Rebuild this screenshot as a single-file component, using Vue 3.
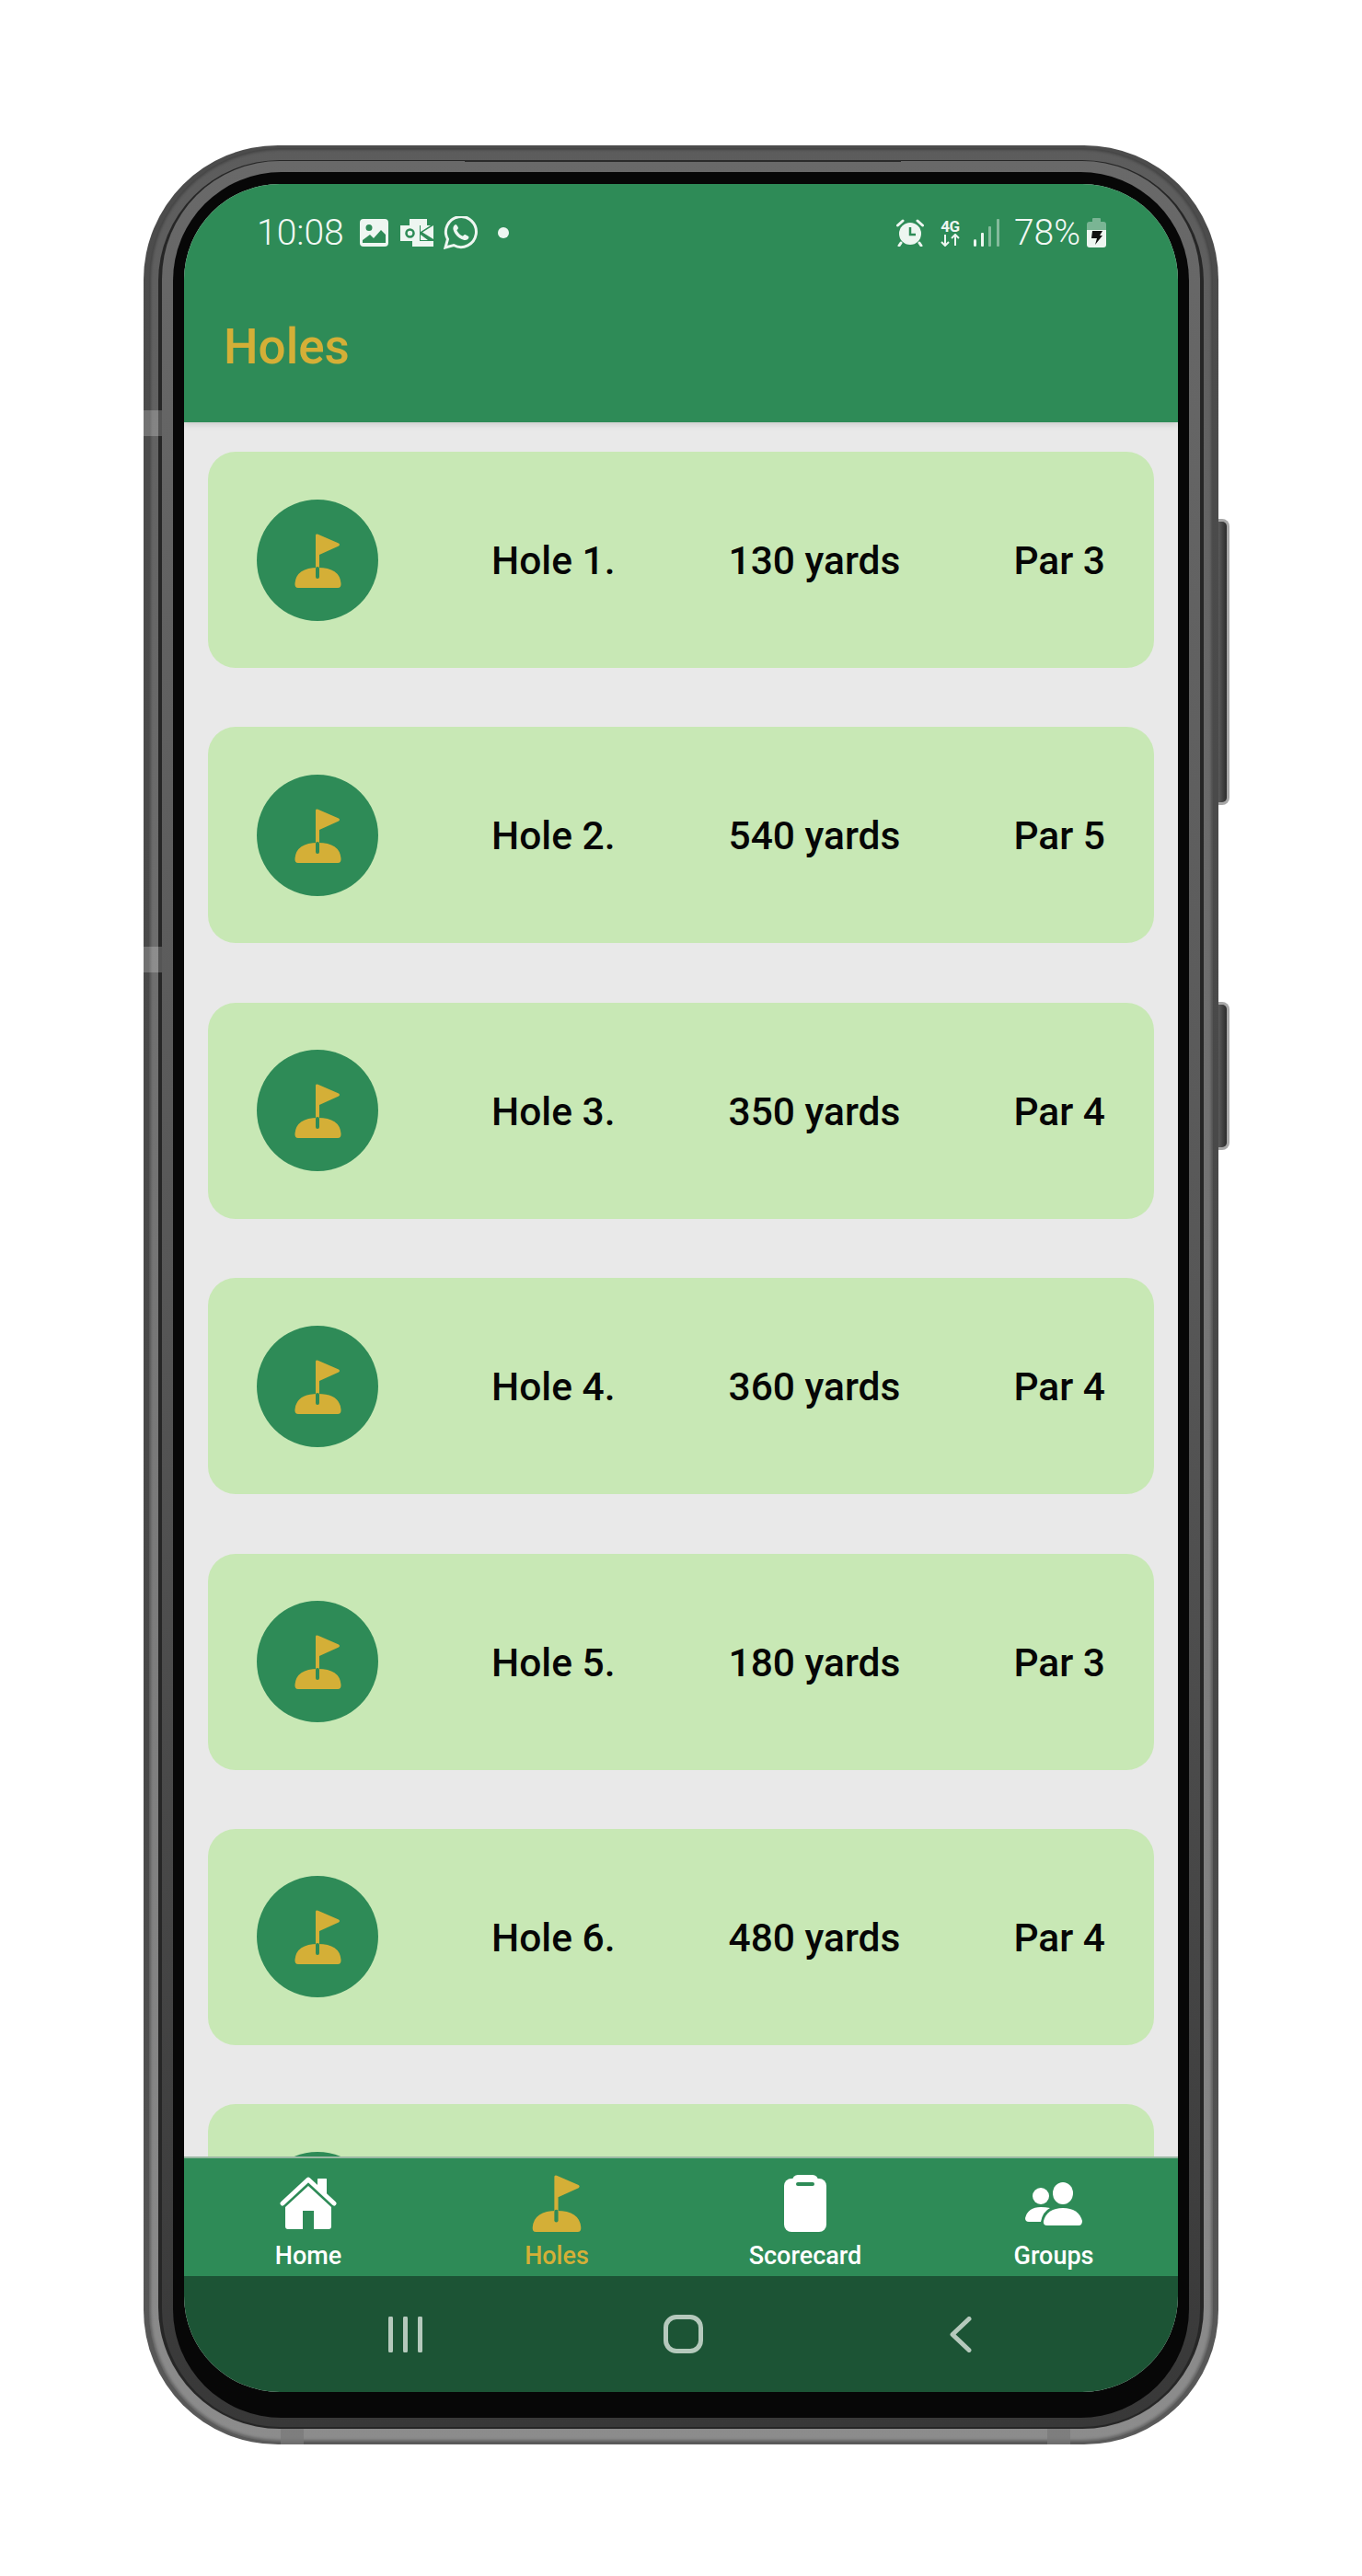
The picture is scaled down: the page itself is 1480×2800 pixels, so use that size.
<script setup>
const holes = [
  { n: 1, yards: 130, par: 3 },
  { n: 2, yards: 540, par: 5 },
  { n: 3, yards: 350, par: 4 },
  { n: 4, yards: 360, par: 4 },
  { n: 5, yards: 180, par: 3 },
  { n: 6, yards: 480, par: 4 },
  { n: 7 }
]
</script>

<template>
  <main class="page">
    <div class="phone">
      <span class="button button-a"></span>
      <span class="button button-b"></span>
      <div class="band-outer">
        <div class="band-light">
          <div class="band-groove">
            <div class="band-inner">
              <div class="bezel">
                <div class="screen">
                  <header class="appbar">
                    <div class="status">
                      <div class="status-group">
                        <span class="clock">10:08</span>
                        <svg class="si si-image" viewBox="0 0 31 30">
                          <path fill="#eef6f1" fill-rule="evenodd" d="M4 0h23a4 4 0 0 1 4 4v22a4 4 0 0 1-4 4H4a4 4 0 0 1-4-4V4a4 4 0 0 1 4-4zM10 6a3.500 3.500 0 1 0 0 7 3.500 3.500 0 0 0 0-7zM3 23v3h25V17l-5-5-8 9-4-4z"/>
                        </svg>
                        <svg class="si si-outlook" viewBox="0 0 37 30">
                          <path fill="#eef6f1" d="M10 0h19v7H10zM13 24h23v6H13zM0 7h21v17H0zM36 7v15L24 14.500z"/>
                          <path fill="#eef6f1" d="M22 7h11l-11 7zM22 23v-6l8 6z"/>
                          <circle cx="10.500" cy="15.500" r="4" fill="none" stroke="#2e8b57" stroke-width="2.500"/>
                        </svg>
                        <svg class="si si-wa" viewBox="0 0 37 36">
                          <path fill="none" stroke="#eef6f1" stroke-width="3" d="M2 34l2.500-9A16.500 16.500 0 1 1 11 31.500z"/>
                          <path fill="#eef6f1" d="M13 9c-2 1-3 3-2.500 5.500C12 20 17 25 22.500 26c2.500.5 4.500-1 5-3 .2-1-3.500-3-4.500-3-1 0-1.500 2-2.500 1.500-2.500-1-5-3.500-6-6-.3-1 1.500-1.500 1.500-2.500S14 8.500 13 9z"/>
                        </svg>
                        <span class="dot"></span>
                      </div>
                      <div class="status-group status-right">
                        <svg class="si si-alarm" viewBox="0 0 30 30">
                          <circle cx="15" cy="16" r="12" fill="#eef6f1"/>
                          <path d="M15 9v8h6" fill="none" stroke="#2e8b57" stroke-width="2.500"/>
                          <path d="M1.500 7L7 2M28.500 7L23 2M5 26l-2 3M25 26l2 3" stroke="#eef6f1" stroke-width="3" stroke-linecap="round"/>
                        </svg>
                        <div class="net">
                          <span class="net-label">4G</span>
                          <svg class="si-arrows" viewBox="0 0 23 14">
                            <path d="M6 1v12M2 9l4 4 4-4M17 13V1M13 5l4-4 4 4" fill="none" stroke="#eef6f1" stroke-width="2"/>
                          </svg>
                        </div>
                        <svg class="si si-signal" viewBox="0 0 28 30">
                          <rect x="0" y="22" width="3" height="8" rx="1.500" fill="#eef6f1"/>
                          <rect x="8" y="15" width="3" height="15" rx="1" fill="#eef6f1"/>
                          <rect x="16" y="8" width="3" height="22" rx="1" fill="#eef6f1" opacity=".45"/>
                          <rect x="25" y="0" width="3" height="30" rx="1" fill="#eef6f1" opacity=".45"/>
                        </svg>
                        <span class="percent">78%</span>
                        <svg class="si si-battery" viewBox="0 0 21 32">
                          <path fill="#eef6f1" opacity=".4" d="M6 1a1 1 0 0 1 1-1h7a1 1 0 0 1 1 1v3h3a3 3 0 0 1 3 3v6H0V7a3 3 0 0 1 3-3h3z"/>
                          <path fill="#eef6f1" d="M0 13h21v16a3 3 0 0 1-3 3H3a3 3 0 0 1-3-3z"/>
                          <path fill="#111" d="M6 14h11l-3 5h3l-8 10 2-7H5z"/>
                        </svg>
                      </div>
                    </div>
                    <div class="toolbar">
                      <h1 class="title">Holes</h1>
                    </div>
                  </header>

                  <section class="list">
                    <article v-for="hole in holes" :key="hole.n" class="card">
                      <div class="avatar">
                        <svg class="flag" viewBox="0 0 51 59">
                          <path d="M23 2Q23 0 25.500 .7L48 10.500Q50 12 48 13.500L27 23V38H23Z" fill="#d4af37"/>
                          <path d="M.5 54Q2 37 25.500 37T50.500 54Q51 59 47 59H4Q0 59 .5 54Z" fill="#d4af37"/>
                          <rect x="23" y="36" width="4" height="13" rx="2" fill="#2e8b57"/>
                        </svg>
                      </div>
                      <template v-if="hole.par">
                        <span class="cell">Hole {{ hole.n }}.</span>
                        <span class="cell">{{ hole.yards }} yards</span>
                        <span class="cell">Par {{ hole.par }}</span>
                      </template>
                    </article>
                  </section>

                  <nav class="tabs">
                    <div class="tab">
                      <div class="tab-icon">
                        <svg class="ic-home" viewBox="0 0 62 58">
                          <path d="M41 2.500a.5.5 0 0 1 .5-.5h9a.5.5 0 0 1 .5.500V22L41 13z" fill="#fff"/>
                          <path d="M3 29L31 3l28 26" fill="none" stroke="#fff" stroke-width="5" stroke-linecap="round" stroke-linejoin="round"/>
                          <path d="M31 10L56 33V54q0 3-3 3H37V37H25V57H9q-3 0-3-3V33Z" fill="#fff"/>
                        </svg>
                      </div>
                      <span class="tab-label">Home</span>
                    </div>
                    <div class="tab active">
                      <div class="tab-icon">
                        <svg class="ic-flag" viewBox="0 0 51 59">
                          <path d="M23 2Q23 0 25.500 .7L48 10.500Q50 12 48 13.500L27 23V38H23Z" fill="#d4af37"/>
                          <path d="M.5 54Q2 37 25.500 37T50.500 54Q51 59 47 59H4Q0 59 .5 54Z" fill="#d4af37"/>
                          <rect x="23" y="36" width="4" height="13" rx="2" fill="#2e8b57"/>
                        </svg>
                      </div>
                      <span class="tab-label">Holes</span>
                    </div>
                    <div class="tab">
                      <div class="tab-icon">
                        <svg class="ic-board" viewBox="0 0 46 62">
                          <rect x="9" y="0" width="28" height="12" rx="6" fill="#fff"/>
                          <rect x="0" y="4" width="46" height="58" rx="8" fill="#fff"/>
                          <rect x="13" y="8" width="20" height="4" rx="2" fill="#2e8b57"/>
                        </svg>
                      </div>
                      <span class="tab-label">Scorecard</span>
                    </div>
                    <div class="tab">
                      <div class="tab-icon">
                        <svg class="ic-group" viewBox="0 0 62 47">
                          <ellipse cx="41" cy="12" rx="11" ry="12" fill="#fff"/>
                          <circle cx="17" cy="15" r="9" fill="#fff"/>
                          <path d="M20 42Q24 28 41 28T62 42Q62 47 58 47H24Q19 47 20 42Z" fill="#fff"/>
                          <path d="M0 39Q3 27 17 27Q22 27 27 28Q19 32 17 43H4Q0 43 0 39Z" fill="#fff"/>
                        </svg>
                      </div>
                      <span class="tab-label">Groups</span>
                    </div>
                  </nav>

                  <div class="sysnav">
                    <svg class="sys sys-recents" viewBox="0 0 37 39">
                      <path d="M2.500 2v35M18.500 2v35M34.500 2v35" stroke="#b5c9bc" stroke-width="5" stroke-linecap="round"/>
                    </svg>
                    <span class="sys-home"></span>
                    <svg class="sys sys-back" viewBox="0 0 24 39">
                      <path d="M21 2.500L3 19.500 21 36.500" fill="none" stroke="#b5c9bc" stroke-width="5" stroke-linecap="round" stroke-linejoin="round"/>
                    </svg>
                  </div>
                </div>
              </div>
            </div>
          </div>
        </div>
      </div>

      <svg class="camera" viewBox="0 0 56 56">
        <circle cx="28" cy="28" r="28" fill="#171717"/>
        <circle cx="28" cy="28" r="17" fill="#1a2a2e" stroke="#333" stroke-width="1.500"/>
        <circle cx="28" cy="28" r="12" fill="#1d3a40"/>
        <circle cx="24" cy="23" r="4" fill="#7fb0c0" opacity=".8"/>
        <circle cx="33" cy="35" r="4.500" fill="#2f5a4c" opacity=".8"/>
      </svg>
      <span class="topline"></span>
      <span class="seam seam-l1"></span>
      <span class="seam seam-l2"></span>
      <span class="seam seam-b1"></span>
      <span class="seam seam-b2"></span>
    </div>
  </main>
</template>

<style>
html, body { margin: 0; background: #fff; }
</style>

<style scoped>
.page {
  box-sizing: border-box;
  width: 1480px;
  height: 2800px;
  padding: 158px 156px 0;
  background: #fff;
  font-family: Roboto, "Liberation Sans", sans-serif;
}
.phone {
  position: relative;
  width: 1168px;
  height: 2499px;
}
.band-outer {
  box-sizing: border-box;
  height: 100%;
  padding: 3px 6px 3px;
  border-radius: 146px;
  background: linear-gradient(180deg, #4c4c4c 0%, #474747 70%, #5a5a5a 100%);
}
.band-light {
  box-sizing: border-box;
  height: 100%;
  padding: 13px 10px 14px;
  border-radius: 142px;
  background: linear-gradient(180deg, #5c5c5c 0%, #767676 50%, #8c8c8c 100%);
  box-shadow: inset 0 0 3px 2px rgba(0, 0, 0, .28);
}
.band-groove {
  box-sizing: border-box;
  height: 100%;
  padding: 1px 4px 2px;
  border-radius: 132px;
  background: #262626;
}
.band-inner {
  box-sizing: border-box;
  height: 100%;
  padding: 12px 12px 10px;
  border-radius: 128px;
  background: linear-gradient(180deg, #696969 0%, #575757 50%, #383838 100%);
}
.bezel {
  box-sizing: border-box;
  height: 100%;
  padding: 13px 12px 28px;
  border-radius: 118px;
  background: #070707;
}
.screen {
  display: flex;
  flex-direction: column;
  height: 100%;
  overflow: hidden;
  border-radius: 104px;
  background: #e9e9e9;
}
.appbar {
  position: relative;
  z-index: 1;
  flex: none;
  height: 259px;
  background: #2e8b57;
  box-shadow: 0 2px 7px rgba(0, 0, 0, .14);
}
.status {
  display: flex;
  align-items: center;
  justify-content: space-between;
  box-sizing: border-box;
  height: 106px;
  padding: 0 78px 0 79px;
}
.status-group {
  display: flex;
  align-items: center;
}
.clock, .percent {
  font-size: 39px;
  font-weight: 300;
  line-height: 40px;
  color: #f2f8f4;
}
.si { display: block; flex: none; }
.si-image { width: 31px; height: 30px; margin-left: 17px; }
.si-outlook { width: 37px; height: 30px; margin-left: 13px; }
.si-wa { width: 37px; height: 36px; margin-left: 10px; }
.dot {
  width: 12px;
  height: 12px;
  margin-left: 22px;
  border-radius: 50%;
  background: #eef6f1;
}
.si-alarm { width: 30px; height: 30px; }
.net {
  display: flex;
  flex-direction: column;
  align-items: center;
  width: 23px;
  margin-left: 17px;
}
.net-label {
  font-size: 17px;
  font-weight: 700;
  line-height: 16px;
  letter-spacing: -.5px;
  color: #eef6f1;
}
.si-arrows { display: block; width: 23px; height: 14px; }
.si-signal { width: 28px; height: 30px; margin-left: 14px; }
.percent { margin-left: 16px; }
.si-battery { width: 21px; height: 32px; margin-left: 7px; }
.toolbar {
  display: flex;
  align-items: center;
  box-sizing: border-box;
  height: 153px;
  padding: 0 0 12px 43px;
}
.title {
  margin: 0;
  font-size: 53px;
  font-weight: 500;
  line-height: 60px;
  color: #d4af37;
}
.list {
  flex: 1;
  display: flex;
  flex-direction: column;
  gap: 64.400px;
  min-height: 0;
  padding: 32px 26px 0 26px;
  overflow: hidden;
}
.card {
  flex: none;
  display: flex;
  align-items: center;
  justify-content: space-between;
  box-sizing: border-box;
  height: 235px;
  padding: 0 53px;
  border-radius: 30px;
  background: #c8e8b5;
}
.avatar {
  flex: none;
  display: flex;
  align-items: flex-start;
  justify-content: center;
  box-sizing: border-box;
  width: 132px;
  height: 132px;
  padding-top: 37px;
  border-radius: 50%;
  background: #2e8b57;
}
.flag { display: block; width: 51px; height: 59px; }
.cell {
  padding-top: 3px;
  font-size: 42.500px;
  font-weight: 500;
  line-height: 50px;
  color: #060606;
}
.tabs {
  position: relative;
  z-index: 1;
  flex: none;
  display: grid;
  grid-template-columns: repeat(4, 1fr);
  box-sizing: border-box;
  height: 130px;
  border-top: 2px solid #9ab8a4;
  background: #2e8b57;
}
.tab {
  display: flex;
  flex-direction: column;
  align-items: center;
  padding-top: 18px;
  color: #fff;
}
.tab.active { color: #d4af37; }
.tab-icon {
  display: flex;
  align-items: center;
  justify-content: center;
  height: 62px;
}
.tab-icon svg { display: block; }
.ic-home { width: 62px; height: 58px; }
.ic-flag { width: 54px; height: 62px; }
.ic-board { width: 46px; height: 62px; }
.ic-group { width: 62px; height: 47px; }
.tab-label {
  margin-top: 10px;
  font-size: 27px;
  font-weight: 500;
  line-height: 32px;
}
.sysnav {
  flex: none;
  display: grid;
  grid-template-columns: repeat(3, 302px);
  align-items: center;
  justify-items: center;
  height: 126px;
  padding-left: 89px;
  background: #1c5435;
}
.sys { display: block; height: 39px; }
.sys-recents { width: 37px; }
.sys-back { width: 24px; }
.sys-home {
  box-sizing: border-box;
  width: 43px;
  height: 42px;
  border: 5px solid #b5c9bc;
  border-radius: 14px;
}
.button {
  position: absolute;
  left: 1168px;
  box-sizing: border-box;
  width: 12px;
  border: 3px solid #a8a8a8;
  border-left: 0;
  border-radius: 0 8px 8px 0;
  background: linear-gradient(90deg, #5a5a5a, #2b2b2b);
}
.button-a { top: 406px; height: 311px; }
.button-b { top: 931px; height: 161px; }
.camera {
  position: absolute;
  left: 556px;
  top: 64px;
  width: 56px;
  height: 56px;
}
.topline {
  position: absolute;
  left: 349px;
  top: 16px;
  width: 474px;
  height: 2px;
  background: #2a2a2a;
}
.seam {
  position: absolute;
  background: rgba(255, 255, 255, .22);
}
.seam-l1 { left: 0; top: 288px; width: 20px; height: 28px; }
.seam-l2 { left: 0; top: 871px; width: 20px; height: 28px; }
.seam-b1 { left: 149px; bottom: 0; width: 25px; height: 17px; background: rgba(120, 120, 120, .7); }
.seam-b2 { left: 982px; bottom: 0; width: 25px; height: 17px; background: rgba(120, 120, 120, .7); }
</style>
